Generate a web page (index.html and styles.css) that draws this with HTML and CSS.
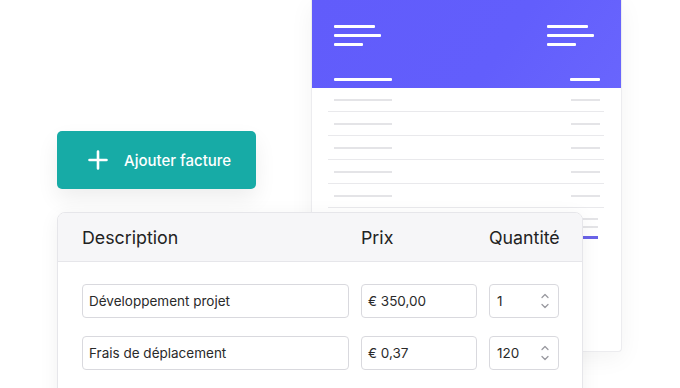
FILE: index.html
```html
<!DOCTYPE html>
<html lang="fr">

<head>
    <meta charset="UTF-8">
    <meta name="viewport" content="width=device-width, initial-scale=1.0">
    <title>Ajouter facture</title>
    <link rel="stylesheet" href="styles.css">
</head>

<body>
    <div class="scene">
        <!-- aperçu de la facture, en arrière-plan -->
        <div class="doc">
            <div class="doc-head">
                <div class="head-top">
                    <div class="lines">
                        <span class="ln w41"></span>
                        <span class="ln w47"></span>
                        <span class="ln w29"></span>
                    </div>
                    <div class="lines">
                        <span class="ln w41"></span>
                        <span class="ln w47"></span>
                        <span class="ln w29"></span>
                    </div>
                </div>
                <div class="head-total">
                    <span class="ln w58"></span>
                    <span class="ln w30"></span>
                </div>
            </div>
            <div class="doc-rows">
                <div class="doc-row"><span class="bar"></span><span class="bar short"></span></div>
                <div class="doc-row"><span class="bar"></span><span class="bar short"></span></div>
                <div class="doc-row"><span class="bar"></span><span class="bar short"></span></div>
                <div class="doc-row"><span class="bar"></span><span class="bar short"></span></div>
                <div class="doc-row"><span class="bar"></span><span class="bar short"></span></div>
            </div>
            <div class="doc-sum">
                <span class="bar short"></span>
                <span class="bar short"></span>
                <span class="bar total"></span>
            </div>
        </div>

        <div class="front">
            <button class="add-btn">
                <svg width="20" height="20" viewBox="0 0 20 20">
                    <path d="M10 1.5v17M1.5 10h17" stroke="#fff" stroke-width="2.6" stroke-linecap="round" fill="none" />
                </svg>
                <span>Ajouter facture</span>
            </button>

            <div class="table-card">
                <div class="table-head">
                    <span>Description</span>
                    <span>Prix</span>
                    <span>Quantité</span>
                </div>
                <div class="table-body">
                    <div class="table-row">
                        <div class="field">Développement projet</div>
                        <div class="field">€ 350,00</div>
                        <div class="field qty">
                            <span>1</span>
                            <svg class="spin" width="10" height="18" viewBox="0 0 10 18">
                                <path d="M2 5.5l3-3 3 3M2 12.5l3 3 3-3" stroke="#9a9aa0" stroke-width="1.3" fill="none" stroke-linecap="round" stroke-linejoin="round" />
                            </svg>
                        </div>
                    </div>
                    <div class="table-row">
                        <div class="field">Frais de déplacement</div>
                        <div class="field">€ 0,37</div>
                        <div class="field qty">
                            <span>120</span>
                            <svg class="spin" width="10" height="18" viewBox="0 0 10 18">
                                <path d="M2 5.5l3-3 3 3M2 12.5l3 3 3-3" stroke="#9a9aa0" stroke-width="1.3" fill="none" stroke-linecap="round" stroke-linejoin="round" />
                            </svg>
                        </div>
                    </div>
                    <div class="table-row">
                        <div class="field"></div>
                        <div class="field"></div>
                        <div class="field qty"></div>
                    </div>
                </div>
            </div>
        </div>
    </div>
</body>

</html>
```

FILE: styles.css
```css
body {
    margin: 0;
    background: #fff;
    font-family: Inter, "Noto Sans", sans-serif;
    color: #222;
}

.scene {
    position: relative;
    width: 680px;
    height: 388px;
    overflow: hidden;
}

/* facture en arrière-plan */
.doc {
    position: absolute;
    left: 311px;
    top: 0;
    width: 311px;
    height: 352px;
    box-sizing: border-box;
    background: #fff;
    border: 1px solid #ececef;
    border-top: none;
    border-radius: 0 0 4px 4px;
    box-shadow: 0 6px 24px rgba(0, 0, 0, 0.05);
}

.doc-head {
    height: 88px;
    box-sizing: border-box;
    padding: 25px 21px 0 22px;
    background: linear-gradient(125deg, #615cfb 0%, #625efc 60%, #6965fd 100%);
}

.head-top {
    display: flex;
    justify-content: space-between;
}

.head-top .lines:last-child {
    margin-right: 6px;
}

.lines {
    display: flex;
    flex-direction: column;
    align-items: flex-start;
    gap: 6px;
    width: 47px;
}

.ln {
    display: block;
    height: 3px;
    background: #fff;
    border-radius: 1px;
}

.w41 { width: 41px; }
.w47 { width: 47px; }
.w29 { width: 29px; }
.w58 { width: 58px; }
.w30 { width: 30px; }

.head-total {
    display: flex;
    justify-content: space-between;
    margin-top: 32px;
}

.doc-rows {
    padding: 0 17px 0 16px;
}

.doc-row {
    display: flex;
    justify-content: space-between;
    padding: 11px 4px 10px 6px;
    border-bottom: 1px solid #e9e9ec;
}

.bar {
    display: block;
    width: 58px;
    height: 2px;
    background: #e4e4e7;
}

.bar.short {
    width: 29px;
}

.doc-sum {
    display: flex;
    flex-direction: column;
    align-items: flex-end;
    gap: 6px;
    padding: 10px 23px 0 0;
}

.bar.total {
    width: 29px;
    height: 3px;
    background: #6a63e8;
    margin-top: 2px;
}

/* premier plan */
.front {
    padding: 131px 0 0 57px;
}

.add-btn {
    display: flex;
    align-items: center;
    gap: 16px;
    width: 199px;
    height: 58px;
    padding: 0 0 0 31px;
    border: none;
    border-radius: 5px;
    background: #17aba6;
    color: #fff;
    font-family: Inter, "Noto Sans", sans-serif;
    font-size: 15px;
    font-weight: 500;
    box-shadow: 0 10px 22px rgba(0, 0, 0, 0.07);
    cursor: pointer;
}

.table-card {
    position: relative;
    z-index: 1;
    width: 526px;
    margin-top: 23px;
    box-sizing: border-box;
    background: #fff;
    border: 1px solid #e6e6ea;
    border-radius: 8px;
    box-shadow: 0 4px 20px rgba(0, 0, 0, 0.06);
    overflow: hidden;
}

.table-head,
.table-row {
    display: grid;
    grid-template-columns: 267px 116px 70px;
    column-gap: 12px;
    padding: 0 0 0 24px;
}

.table-head {
    height: 48px;
    align-items: center;
    background: #f6f6f8;
    border-bottom: 1px solid #e6e6ea;
    font-size: 17.8px;
    white-space: nowrap;
}

.table-body {
    display: flex;
    flex-direction: column;
    gap: 18px;
    padding-top: 22px;
}

.field {
    display: flex;
    align-items: center;
    height: 34px;
    box-sizing: border-box;
    padding: 0 6px;
    border: 1px solid #d9d9de;
    border-radius: 4px;
    font-size: 13.5px;
    color: #2a2a2a;
}

.field.qty {
    justify-content: space-between;
    padding: 0 8px 0 7px;
}
```
